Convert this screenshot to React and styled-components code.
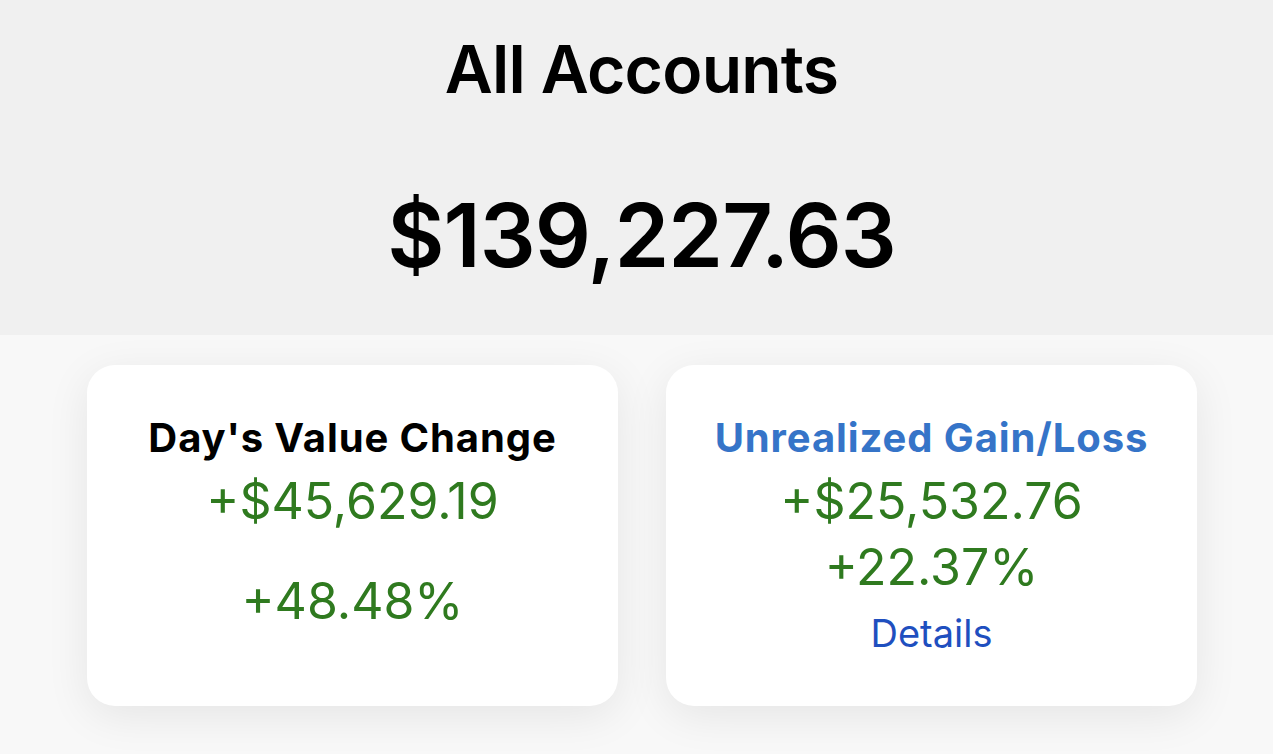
import React from "react";
import styled, { createGlobalStyle } from "styled-components";

const Global = createGlobalStyle`
  html, body { margin: 0; padding: 0; background: #f8f8f8; }
  body { font-family: Inter, "Noto Sans", "Liberation Sans", sans-serif; color: #000; }
`;

const Page = styled.div`
  min-height: 754px;
  background: #f8f8f8;
`;

const Header = styled.header`
  background: #f0f0f0;
  height: 335px;
  box-sizing: border-box;
  padding: 36px 0 0 10px;
  display: flex;
  flex-direction: column;
  align-items: center;
`;

const Title = styled.h1`
  margin: 0;
  font-size: 66px;
  line-height: 66px;
  font-weight: 600;
  letter-spacing: -0.8px;
`;

const Total = styled.div`
  margin-top: 89px;
  font-size: 88px;
  line-height: 88px;
  font-weight: 600;
  letter-spacing: -1px;
`;

const Cards = styled.section`
  display: grid;
  grid-template-columns: 531px 531px;
  column-gap: 48px;
  padding: 30px 0 0 87px;
`;

const Card = styled.div`
  height: 341px;
  box-sizing: border-box;
  background: #fff;
  border-radius: 28px;
  box-shadow: 0 10px 44px rgba(0, 0, 0, 0.08);
  padding-top: 49px;
  display: flex;
  flex-direction: column;
  align-items: center;
  text-align: center;
`;

const CardTitle = styled.div`
  font-size: 40px;
  line-height: 48px;
  font-weight: 700;
  letter-spacing: 0.9px;
  color: ${(p) => (p.$link ? "#3574c8" : "#000")};
`;

const Value = styled.div`
  margin-top: ${(p) => p.$gap || 0}px;
  font-size: 50px;
  line-height: 66px;
  font-weight: 400;
  color: #2f7a1f;
`;

const Details = styled.a`
  margin-top: 2px;
  font-size: 38px;
  line-height: 62px;
  color: #1f4fbf;
  text-decoration: none;
`;

export default function App() {
  return (
    <Page>
      <Global />
      <Header>
        <Title>All Accounts</Title>
        <Total>$139,227.63</Total>
      </Header>
      <Cards>
        <Card>
          <CardTitle>Day's Value Change</CardTitle>
          <Value $gap={6}>+$45,629.19</Value>
          <Value $gap={34}>+48.48%</Value>
        </Card>
        <Card>
          <CardTitle $link>Unrealized Gain/Loss</CardTitle>
          <Value $gap={6}>+$25,532.76</Value>
          <Value>+22.37%</Value>
          <Details href="#">Details</Details>
        </Card>
      </Cards>
    </Page>
  );
}
